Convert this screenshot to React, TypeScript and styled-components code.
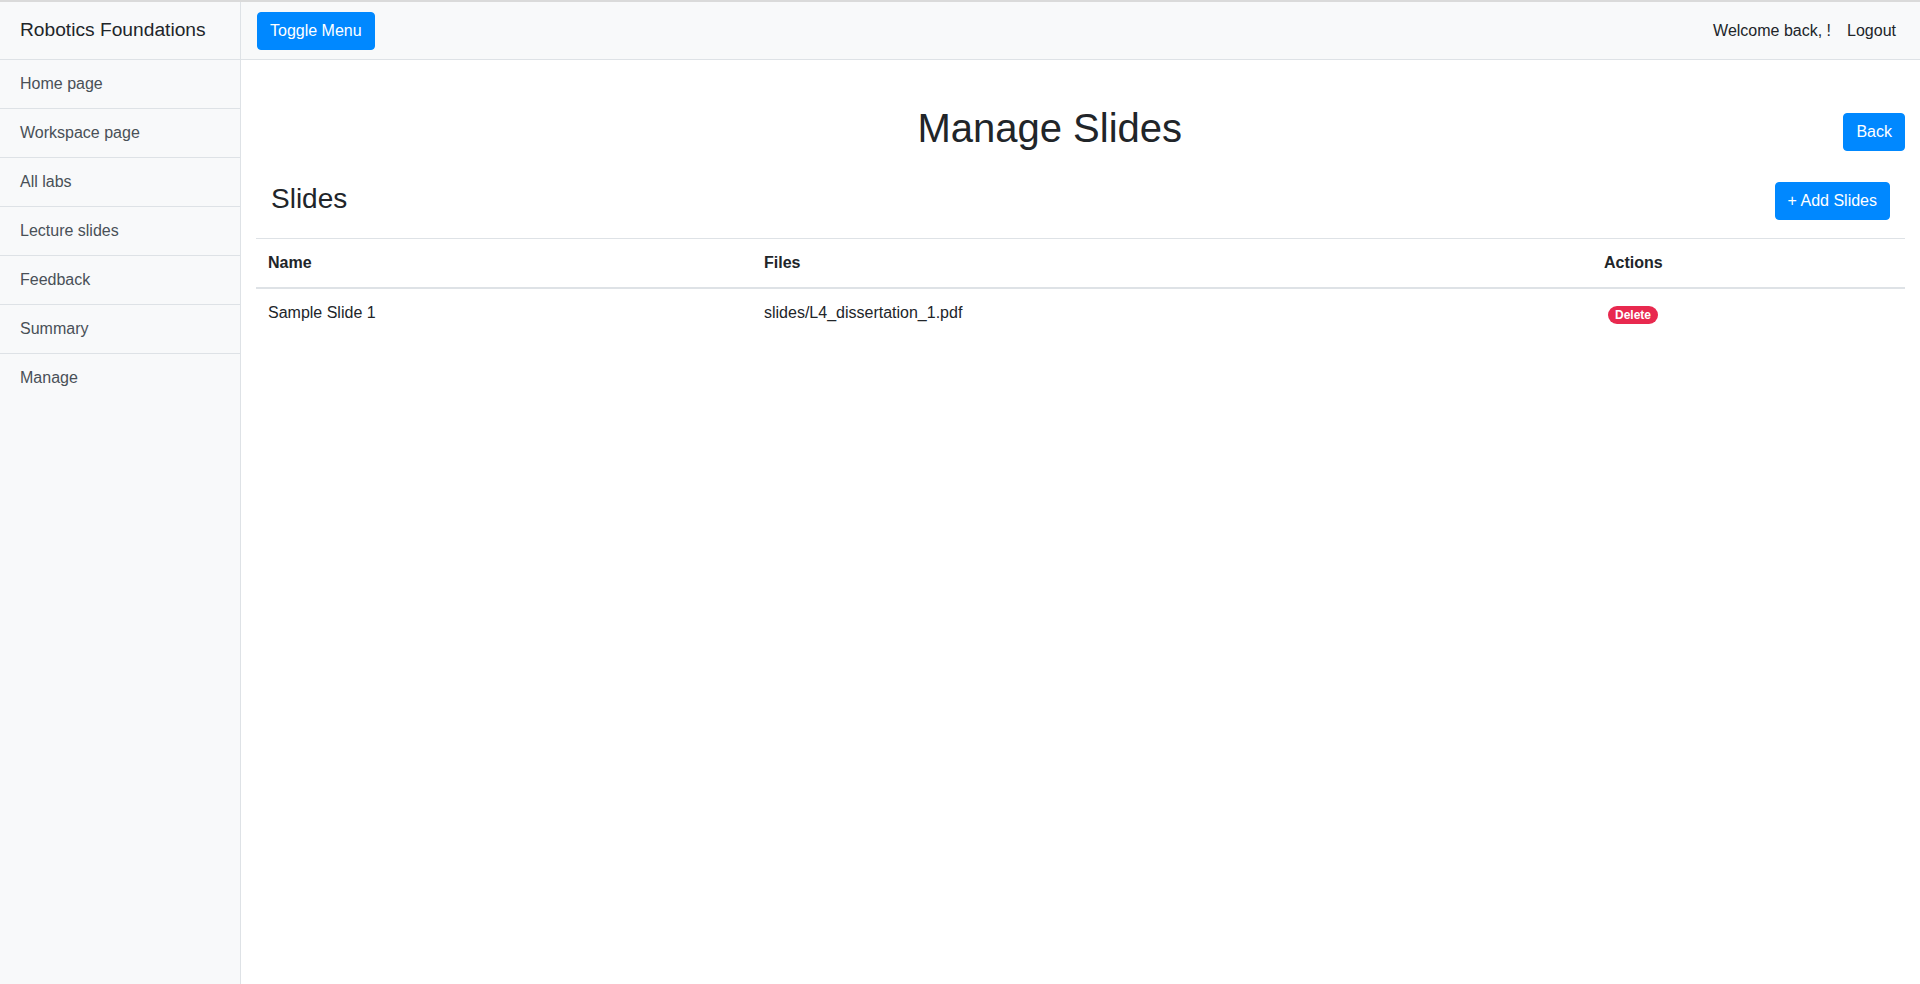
import React from "react";
import styled, { createGlobalStyle } from "styled-components";

const GlobalStyle = createGlobalStyle`
  * { box-sizing: border-box; }
  body {
    margin: 0;
    font-family: "Liberation Sans", Arial, Helvetica, sans-serif;
    font-size: 16px;
    line-height: 1.5;
    color: #212529;
    background: #fff;
  }
`;

const Wrapper = styled.div`
  display: flex;
  min-height: 100vh;
  border-top: 2px solid #dadada;
`;

const Sidebar = styled.aside`
  width: 241px;
  flex-shrink: 0;
  background: #f8f9fa;
  border-right: 1px solid #dee2e6;
`;

const SidebarHeading = styled.div`
  height: 58px;
  padding: 0 20px;
  display: flex;
  align-items: center;
  font-size: 19.2px;
  color: #212529;
  border-bottom: 1px solid #dee2e6;
`;

const NavList = styled.nav`
  display: flex;
  flex-direction: column;
`;

const NavItem = styled.a`
  display: block;
  padding: 12px 20px;
  color: #495057;
  text-decoration: none;
  border-bottom: 1px solid #dee2e6;
  &:last-child {
    border-bottom: none;
  }
`;

const PageContent = styled.div`
  flex: 1;
  display: flex;
  flex-direction: column;
  min-width: 0;
`;

const TopBar = styled.header`
  height: 58px;
  padding: 0 16px;
  display: flex;
  align-items: center;
  justify-content: space-between;
  background: #f8f9fa;
  border-bottom: 1px solid #dee2e6;
`;

const TopLinks = styled.div`
  display: flex;
  align-items: center;
`;

const TopLink = styled.a`
  padding: 8px;
  color: #212529;
  text-decoration: none;
`;

const Button = styled.button`
  font-family: inherit;
  font-size: 16px;
  line-height: 24px;
  padding: 6px 12px;
  color: #fff;
  background: #0088ff;
  border: 1px solid #0088ff;
  border-radius: 4px;
  cursor: pointer;
`;

const Container = styled.main`
  padding: 44px 15px 0;
`;

const TitleRow = styled.div`
  display: flex;
  align-items: center;
  margin-bottom: 22px;
`;

const PageTitle = styled.h1`
  flex: 1;
  margin: 0 0 8px;
  font-size: 40px;
  font-weight: 400;
  line-height: 1.2;
  text-align: center;
`;

const SectionRow = styled.div`
  display: flex;
  align-items: center;
  justify-content: space-between;
  padding: 0 15px;
  margin-bottom: 18px;
`;

const SectionTitle = styled.h3`
  margin: 0 0 4px;
  font-size: 28px;
  font-weight: 400;
  line-height: 1.2;
`;

const Table = styled.table`
  width: 100%;
  border-collapse: collapse;
  color: #212529;
`;

const Th = styled.th<{ $width?: number }>`
  width: ${({ $width }) => ($width ? `${$width}px` : "auto")};
  padding: 12px;
  text-align: left;
  font-weight: 700;
  border-top: 1px solid #dee2e6;
  border-bottom: 2px solid #dee2e6;
`;

const Td = styled.td`
  padding: 12px;
  text-align: left;
  vertical-align: top;
  border-top: 1px solid #dee2e6;
`;

const Badge = styled.button`
  display: inline-block;
  margin: 2px 0 0 4px;
  padding: 3px 7px;
  font-family: inherit;
  font-size: 12px;
  font-weight: 700;
  line-height: 1;
  color: #fff;
  background: #e8294f;
  border: none;
  border-radius: 10rem;
  vertical-align: middle;
  cursor: pointer;
`;

const navItems = [
  "Home page",
  "Workspace page",
  "All labs",
  "Lecture slides",
  "Feedback",
  "Summary",
  "Manage",
];

const slides = [{ name: "Sample Slide 1", file: "slides/L4_dissertation_1.pdf" }];

const App: React.FC = () => {
  return (
    <>
      <GlobalStyle />
      <Wrapper>
        <Sidebar>
          <SidebarHeading>Robotics Foundations</SidebarHeading>
          <NavList>
            {navItems.map((item) => (
              <NavItem key={item} href="#">
                {item}
              </NavItem>
            ))}
          </NavList>
        </Sidebar>

        <PageContent>
          <TopBar>
            <Button>Toggle Menu</Button>
            <TopLinks>
              <TopLink href="#">Welcome back, !</TopLink>
              <TopLink href="#">Logout</TopLink>
            </TopLinks>
          </TopBar>

          <Container>
            <TitleRow>
              <PageTitle>Manage Slides</PageTitle>
              <Button>Back</Button>
            </TitleRow>

            <SectionRow>
              <SectionTitle>Slides</SectionTitle>
              <Button>+ Add Slides</Button>
            </SectionRow>

            <Table>
              <thead>
                <tr>
                  <Th $width={496}>Name</Th>
                  <Th $width={840}>Files</Th>
                  <Th>Actions</Th>
                </tr>
              </thead>
              <tbody>
                {slides.map((s) => (
                  <tr key={s.name}>
                    <Td>{s.name}</Td>
                    <Td>{s.file}</Td>
                    <Td>
                      <Badge>Delete</Badge>
                    </Td>
                  </tr>
                ))}
              </tbody>
            </Table>
          </Container>
        </PageContent>
      </Wrapper>
    </>
  );
};

export default App;
